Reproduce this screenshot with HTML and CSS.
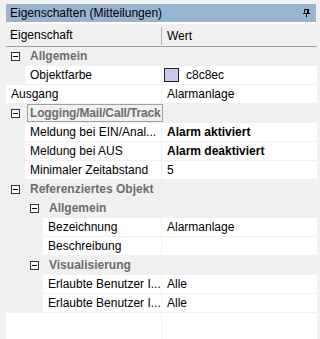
FILE: index.html
```html
<!DOCTYPE html>
<html lang="de">
<head>
  <meta charset="UTF-8">
  <title>Eigenschaften</title>
  <link rel="stylesheet" href="styles.css">
</head>
<body>
  <div class="titlebar">
    <span>Eigenschaften (Mitteilungen)</span>
    <svg class="pin" width="7" height="8" viewBox="0 0 7 8">
      <path d="M1.5 0.5h3v4h-3z" fill="none" stroke="#000"/>
      <rect x="4" y="0" width="2" height="5"/>
      <rect x="0" y="4" width="7" height="1"/>
      <rect x="3" y="5" width="1" height="3"/>
    </svg>
  </div>

  <div class="header">
    <div class="hname">Eigenschaft</div>
    <div class="hval">Wert</div>
  </div>

  <div class="grid">
    <div class="cat"><span class="box"></span><span class="label">Allgemein</span></div>
    <div class="prop l1">
      <div class="name">Objektfarbe</div>
      <div class="value color"><span class="swatch"></span>c8c8ec</div>
    </div>
    <div class="prop">
      <div class="name">Ausgang</div>
      <div class="value">Alarmanlage</div>
    </div>

    <div class="cat"><span class="box"></span><span class="label focus">Logging/Mail/Call/Track</span></div>
    <div class="prop l1">
      <div class="name">Meldung bei EIN/Anal...</div>
      <div class="value bold">Alarm aktiviert</div>
    </div>
    <div class="prop l1">
      <div class="name">Meldung bei AUS</div>
      <div class="value bold">Alarm deaktiviert</div>
    </div>
    <div class="prop l1">
      <div class="name">Minimaler Zeitabstand</div>
      <div class="value">5</div>
    </div>

    <div class="cat"><span class="box"></span><span class="label">Referenziertes Objekt</span></div>
    <div class="cat sub"><span class="box"></span><span class="label">Allgemein</span></div>
    <div class="prop l2">
      <div class="name">Bezeichnung</div>
      <div class="value">Alarmanlage</div>
    </div>
    <div class="prop l2">
      <div class="name">Beschreibung</div>
      <div class="value"></div>
    </div>
    <div class="cat sub"><span class="box"></span><span class="label">Visualisierung</span></div>
    <div class="prop l2">
      <div class="name">Erlaubte Benutzer I...</div>
      <div class="value">Alle</div>
    </div>
    <div class="prop l2">
      <div class="name">Erlaubte Benutzer I...</div>
      <div class="value">Alle</div>
    </div>

    <div class="empty">
      <div class="name"></div>
      <div class="value"></div>
    </div>
  </div>
</body>
</html>
```

FILE: styles.css
```css
body {
  margin: 0;
  height: 339px;
  overflow: hidden;
  background: #f0f0f0;
  font-family: "Liberation Sans", Arial, sans-serif;
  font-size: 12px;
  color: #000;
}
.titlebar {
  margin: 4px 4px 0 6px;
  height: 18px;
  padding: 0 6px 0 4px;
  background: #99b4d1;
  display: flex;
  align-items: center;
  justify-content: space-between;
}
.pin {
  display: block;
}
.header {
  margin: 0 3px 0 6px;
  border-top: 2px solid #fff;
  border-bottom: 1px solid #a0a0a0;
  height: 22px;
  display: grid;
  grid-template-columns: 155px 1fr;
}
.hname {
  padding-left: 4px;
  line-height: 22px;
}
.hval {
  margin: 3px 0 1px;
  border-left: 1px solid #b4b4b4;
  padding-left: 5px;
  line-height: 18px;
}
.grid {
  margin: 0 3px 0 6px;
}
.prop, .empty {
  display: grid;
  grid-template-columns: 155px 1fr;
  column-gap: 1px;
  height: 18px;
  margin-bottom: 1px;
}
.empty {
  height: 40px;
  margin: 0;
}
.name, .value {
  background: #fff;
  padding-left: 5px;
  line-height: 18px;
  white-space: nowrap;
  overflow: hidden;
}
.l1 .name {
  margin-left: 19px;
}
.l2 .name {
  margin-left: 37px;
}
.value.color {
  padding-left: 2px;
  display: flex;
  align-items: center;
}
.swatch {
  width: 15px;
  height: 14px;
  box-sizing: border-box;
  border: 1px solid #222;
  background: #c8c8ec;
  margin-right: 7px;
}
.bold {
  font-weight: bold;
}
.cat {
  height: 18px;
  margin-bottom: 1px;
  padding-left: 5px;
  display: flex;
  align-items: center;
  font-weight: bold;
  color: #6d6d6d;
  white-space: nowrap;
}
.cat.sub {
  padding-left: 24px;
}
.box {
  width: 9px;
  height: 9px;
  box-sizing: border-box;
  border: 1px solid #333;
  background: linear-gradient(#000, #000) center / 5px 1px no-repeat #fff;
  margin-right: 10px;
  flex: none;
}
.focus {
  margin-left: -3px;
  min-width: 134px;
  box-sizing: border-box;
  border: 1px solid #a0a0a0;
  padding: 0 1px 0 2px;
  line-height: 16px;
  letter-spacing: -0.15px;
}
```
